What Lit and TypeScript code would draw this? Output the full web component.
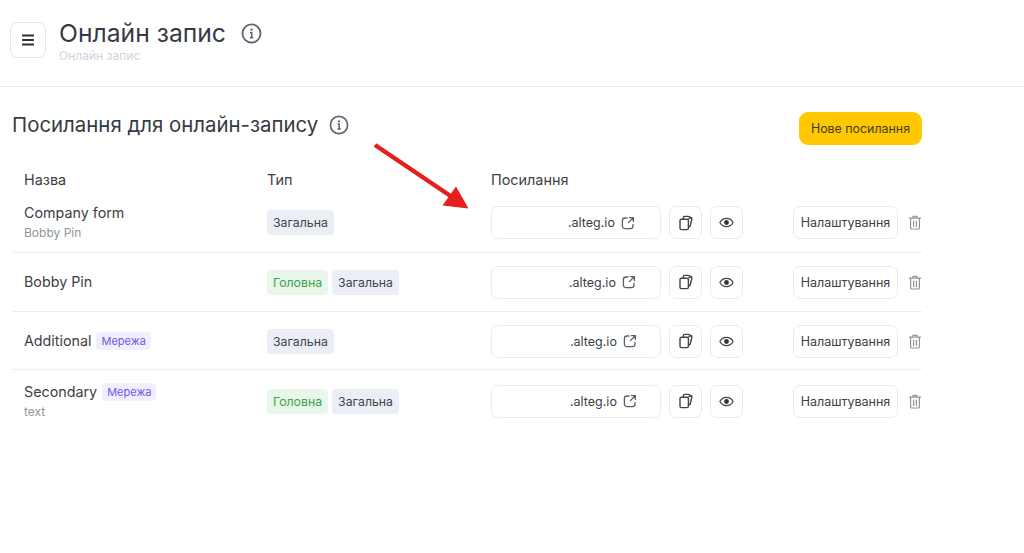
import { LitElement, html, css } from "lit";
import { customElement } from "lit/decorators.js";

const info = (s: number) => html`<svg width=${s} height=${s} viewBox="0 0 20 20" fill="none" stroke="#5f6570" stroke-width="1.7"><circle cx="10" cy="10" r="8.6"/><path d="M8.6 9h1.6v5M8.4 14h3.4" stroke-width="1.5"/><path d="M10 5.4v1.8" stroke-width="2.1"/></svg>`;
const ext = html`<svg width="14" height="14" viewBox="0 0 14 14" fill="none" stroke="#5a606b" stroke-width="1.3" stroke-linecap="round" stroke-linejoin="round"><path d="M6 2H4a2.6 2.6 0 0 0-2.600 2.600V10A2.600 2.600 0 0 0 4 12.600h5.400A2.600 2.600 0 0 0 12 10V8.400"/><path d="M8.400 1.600h4v4M12.200 1.800 7.400 6.600"/></svg>`;
const copy = html`<svg width="16" height="16" viewBox="0 0 16 16" fill="none" stroke="#3e434c" stroke-width="1.400" stroke-linejoin="round"><rect x="2" y="4.200" width="8.400" height="10.400" rx="1.400"/><path d="M5.400 4V2.600a1.200 1.200 0 0 1 1.200-1.200h3.600l3 1.200a1.200 1.200 0 0 1 .7 1.400l-1.800 7.400-1.700.6"/><path d="M10.400 3.800 12.800 2.800"/></svg>`;
const eye = html`<svg width="15" height="15" viewBox="0 0 15 15" fill="none"><path d="M.9 7.500C2.300 4.900 4.700 3.400 7.500 3.400s5.200 1.500 6.600 4.100c-1.400 2.600-3.800 4.100-6.600 4.100S2.300 10.100.9 7.500Z" stroke="#3e434c" stroke-width="1.200"/><circle cx="7.500" cy="7.500" r="2.400" fill="#2f333a"/></svg>`;
const trash = html`<svg width="14" height="15" viewBox="0 0 14 15" fill="none" stroke="#8f949d" stroke-width="1.200" stroke-linecap="round" stroke-linejoin="round"><path d="M1.400 3.200h11.200M5 3V1.400h4V3M2.600 3.400v9.400a1.200 1.200 0 0 0 1.200 1.200h6.400a1.200 1.200 0 0 0 1.200-1.200V3.400M5.600 6v5.400M8.400 6v5.400"/></svg>`;

interface Row { name: string; sub?: string; net?: boolean; main?: boolean; pad: number; }
const rows: Row[] = [
  { name: "Company form", sub: "Bobby Pin", pad: 76 },
  { name: "Bobby Pin", main: true, pad: 77 },
  { name: "Additional", net: true, pad: 78 },
  { name: "Secondary", sub: "text", net: true, main: true, pad: 78 },
];

@customElement("app-root")
export class AppRoot extends LitElement {
  static styles = css`
    :host { display: block; position: relative; width: 1024px; height: 553px; overflow: hidden; background: #fff; font-family: Inter, "Liberation Sans", sans-serif; color: #3c4148; }
    .top { height: 87px; box-sizing: border-box; border-bottom: 1px solid #e9ebf3; display: flex; align-items: flex-start; padding: 22px 0 0 10px; gap: 13px; }
    .menu { width: 36px; height: 36px; box-sizing: border-box; border: 1.500px solid #e4e7f0; border-radius: 7px; display: flex; align-items: center; justify-content: center; }
    .tt { display: flex; flex-direction: column; }
    .tline { display: flex; align-items: center; gap: 15px; height: 22px; }
    h1 { margin: 0; font-size: 24.700px; font-weight: 400; line-height: 22px; color: #363b43; }
    .subt { font-size: 12px; line-height: 15px; margin-top: 4px; color: #cfd3db; }
    .sect { width: 922px; padding: 25px 0 0 12px; box-sizing: border-box; }
    .shead { display: flex; justify-content: space-between; align-items: flex-start; }
    .stitle { display: flex; align-items: center; gap: 11px; }
    h2 { margin: 0; font-size: 20.400px; font-weight: 400; line-height: 25px; color: #363b43; }
    .new { width: 123px; height: 33px; background: #ffc800; border-radius: 9px; display: flex; align-items: center; justify-content: center; font-size: 12.400px; color: #443c14; }
    .row { display: grid; grid-template-columns: 243px 224px 302px 1fr; align-items: center; padding-left: 12px; box-sizing: border-box; }
    .hrow { font-size: 14.400px; line-height: 18px; margin-top: 26px; height: 18px; }
    .drow { border-bottom: 1px solid #ebedf3; height: 59px; }
    .drow:nth-child(5) { height: 58px; padding-top: 1px; }
    .drow.two { height: 64px; padding-top: 4px; }
    .drow.two .namecell { margin-bottom: 2px; }
    .drow:last-child { border-bottom: none; height: 62px; padding-top: 0; }
    .drow:last-child .namecell { margin-bottom: 0; }
    .n { display: flex; align-items: center; gap: 5px; font-size: 14.300px; line-height: 18px; }
    .s { font-size: 12px; line-height: 15px; margin-top: 3px; color: #8f949d; }
    .tags { display: flex; gap: 4px; }
    .tag { height: 25px; padding: 0 6px; border-radius: 4px; background: #eceef5; display: flex; align-items: center; font-size: 12.300px; color: #3f444b; }
    .tag.g { background: #e9f7ea; color: #3ea04a; }
    .net { height: 18px; padding: 0 5px; border-radius: 4px; background: #f1effe; color: #7355f0; font-size: 11px; display: flex; align-items: center; }
    .link { display: flex; align-items: center; gap: 8px; }
    .url { width: 170px; height: 33px; box-sizing: border-box; border: 1px solid #e8eaf1; border-radius: 7px; display: flex; align-items: center; gap: 6px; font-size: 12.500px; color: #3c4148; }
    .ib { width: 33px; height: 33px; box-sizing: border-box; border: 1px solid #e8eaf1; border-radius: 7px; display: flex; align-items: center; justify-content: center; }
    .acts { display: flex; align-items: center; gap: 10px; }
    .cfg { width: 105px; height: 33px; box-sizing: border-box; border: 1px solid #e8eaf1; border-radius: 7px; display: flex; align-items: center; justify-content: center; font-size: 12.500px; color: #3c4148; }
    .arrow { position: absolute; left: 372px; top: 142px; }
  `;

  render() {
    return html`
      <header class="top">
        <div class="menu">
          <svg width="14" height="12" viewBox="0 0 14 12" stroke="#2e3238" stroke-width="2"><path d="M1 1.500h12M1 6h12M1 10.500h12"/></svg>
        </div>
        <div class="tt">
          <div class="tline"><h1>Онлайн запис</h1>${info(21)}</div>
          <div class="subt">Онлайн запис</div>
        </div>
      </header>
      <section class="sect">
        <div class="shead">
          <div class="stitle"><h2>Посилання для онлайн-запису</h2>${info(20)}</div>
          <div class="new">Нове посилання</div>
        </div>
        <div class="row hrow"><div>Назва</div><div>Тип</div><div>Посилання</div><div></div></div>
        ${rows.map((r) => html`
          <div class="row drow ${r.sub ? "two" : ""}">
            <div class="namecell">
              <div class="n">${r.name}${r.net ? html`<span class="net">Мережа</span>` : ""}</div>
              ${r.sub ? html`<div class="s">${r.sub}</div>` : ""}
            </div>
            <div class="tags">
              ${r.main ? html`<span class="tag g">Головна</span>` : ""}
              <span class="tag">Загальна</span>
            </div>
            <div class="link">
              <div class="url" style="padding-left:${r.pad}px"><span>.alteg.io</span>${ext}</div>
              <div class="ib">${copy}</div>
              <div class="ib">${eye}</div>
            </div>
            <div class="acts"><div class="cfg">Налаштування</div>${trash}</div>
          </div>`)}
      </section>
      <svg class="arrow" width="110" height="80" viewBox="0 0 110 80">
        <path d="M3 3 80 55" stroke="#e61e1e" stroke-width="4.500"/>
        <path d="M96.500 66.500 70.500 63.500 84 44.500Z" fill="#e61e1e"/>
      </svg>
    `;
  }
}
